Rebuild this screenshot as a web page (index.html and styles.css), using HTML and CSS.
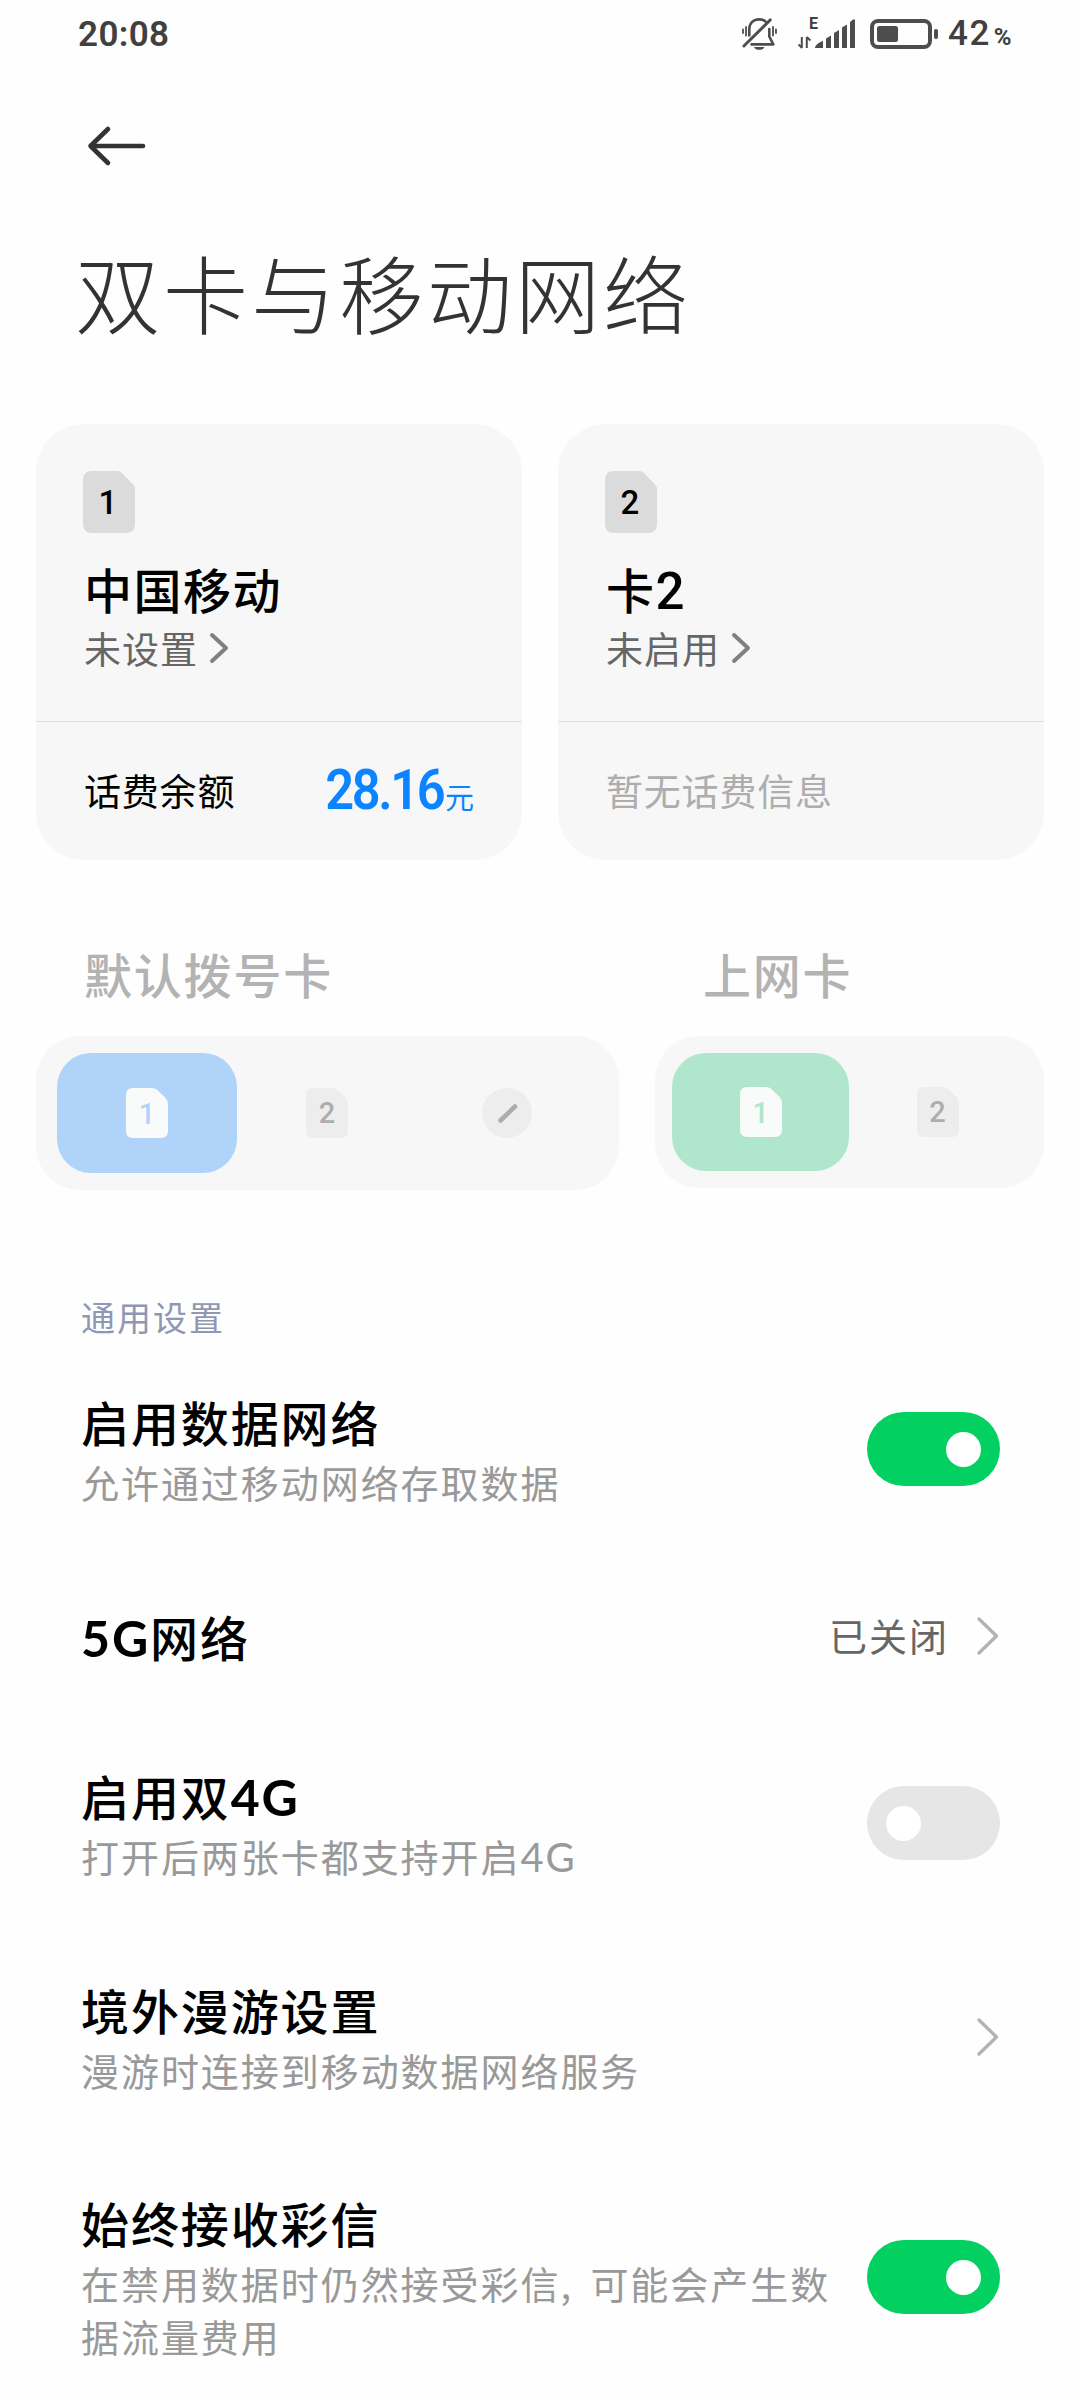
FILE: index.html
```
<!DOCTYPE html>
<html lang="zh-CN">
<head>
<meta charset="utf-8">
<title>双卡与移动网络</title>
<link rel="stylesheet" href="styles.css">
</head>
<body>
<header class="status">
  <span class="clock">20:08</span>
  <div class="status-icons">
    <svg class="bell" width="36" height="34" viewBox="0 0 36 34" fill="none" stroke="#4d4d4d" stroke-width="2.6" stroke-linecap="round" stroke-linejoin="round">
      <path d="M7.300 18.500V12.500C7.300 6 11.500 2.400 17.300 2.400C20 2.400 22.500 3.200 24 5"/>
      <path d="M27.300 12V19.500L31.300 27.400H9.500"/>
      <path d="M28.300 2.900L1.900 29" stroke-width="2.900"/>
      <path d="M1 12.500V16M4 10V18.500M31 10V18.500M34 12.500V16" stroke-width="1.800"/>
      <path d="M12 30H22.500C21 33.800 13.500 33.800 12 30Z" fill="#4d4d4d" stroke="none"/>
    </svg>
    <div class="signal">
      <span class="net">E</span>
      <svg width="58" height="32" viewBox="0 0 58 32" fill="#4d4d4d">
        <path d="M3.800 19V30M4 30L0.600 26.500M8.800 30V19M8.800 19L12.400 22.500" fill="none" stroke="#4d4d4d" stroke-width="2"/>
        <path d="M17 30C17 27.500 21 24 25 23V30ZM28 30V20.500L33 17.500V30ZM36 30V15L41 12V30ZM44 30V9.500L49 6.500V30ZM52 30V4L55 1.500H57V30Z"/>
      </svg>
    </div>
    <svg class="battery" width="69" height="30" viewBox="0 0 69 30">
      <rect x="2" y="2" width="58" height="26" rx="6" fill="none" stroke="#4d4d4d" stroke-width="4"/>
      <rect x="7" y="7" width="21" height="16" rx="2.500" fill="#4d4d4d"/>
      <rect x="64" y="10" width="4" height="10" rx="2" fill="#4d4d4d"/>
    </svg>
    <span class="percent">42<small>%</small></span>
  </div>
</header>

<nav class="nav">
  <svg width="60" height="42" viewBox="0 0 60 42" fill="none" stroke="#333" stroke-width="4.600" stroke-linecap="round" stroke-linejoin="round"><path d="M57 21H5M22 4L4.500 21L22 38"/></svg>
</nav>
<h1 class="title">双卡与移动网络</h1>

<section class="cards">
  <article class="card">
    <div class="card-top">
      <div class="sim sim-lg">
        <svg viewBox="0 0 52 62"><path d="M9 0H34Q37 0 39 2L50 13.500Q52 15.500 52 18V53Q52 62 43 62H9Q0 62 0 53V9Q0 0 9 0Z"/></svg>
        <span>1</span>
      </div>
      <h2>中国移动</h2>
      <p>未设置<svg class="chev-sm" width="20" height="32" viewBox="0 0 20 32"><path d="M3 3L17 16L3 29"/></svg></p>
    </div>
    <div class="card-bottom">
      <span>话费余额</span>
      <span class="amount"><b>28.16</b>元</span>
    </div>
  </article>
  <article class="card">
    <div class="card-top">
      <div class="sim sim-lg">
        <svg viewBox="0 0 52 62"><path d="M9 0H34Q37 0 39 2L50 13.500Q52 15.500 52 18V53Q52 62 43 62H9Q0 62 0 53V9Q0 0 9 0Z"/></svg>
        <span>2</span>
      </div>
      <h2>卡<b>2</b></h2>
      <p>未启用<svg class="chev-sm" width="20" height="32" viewBox="0 0 20 32"><path d="M3 3L17 16L3 29"/></svg></p>
    </div>
    <div class="card-bottom muted"><span>暂无话费信息</span></div>
  </article>
</section>

<section class="defaults">
  <div class="default-call">
    <h3>默认拨号卡</h3>
    <div class="panel">
      <div class="option blue"><div class="sim"><svg viewBox="0 0 42 50"><path d="M7 0H26Q30 0 32 2.500L39.500 10Q42 12.500 42 16V43Q42 50 35 50H7Q0 50 0 43V7Q0 0 7 0Z"/></svg><span>1</span></div></div>
      <div class="option"><div class="sim"><svg viewBox="0 0 42 50"><path d="M7 0H26Q30 0 32 2.500L39.500 10Q42 12.500 42 16V43Q42 50 35 50H7Q0 50 0 43V7Q0 0 7 0Z"/></svg><span>2</span></div></div>
      <div class="option"><svg width="50" height="50" viewBox="0 0 50 50"><circle cx="25" cy="25" r="25" fill="#ededed"/><path d="M18.500 32.500L33 18.500" stroke="#adadad" stroke-width="4.600" stroke-linecap="round"/></svg></div>
    </div>
  </div>
  <div class="default-data">
    <h3>上网卡</h3>
    <div class="panel">
      <div class="option green"><div class="sim"><svg viewBox="0 0 42 50"><path d="M7 0H26Q30 0 32 2.500L39.500 10Q42 12.500 42 16V43Q42 50 35 50H7Q0 50 0 43V7Q0 0 7 0Z"/></svg><span>1</span></div></div>
      <div class="option"><div class="sim"><svg viewBox="0 0 42 50"><path d="M7 0H26Q30 0 32 2.500L39.500 10Q42 12.500 42 16V43Q42 50 35 50H7Q0 50 0 43V7Q0 0 7 0Z"/></svg><span>2</span></div></div>
    </div>
  </div>
</section>

<h4 class="group">通用设置</h4>
<main class="rows">
  <div class="row">
    <div class="text"><h5>启用数据网络</h5><p>允许通过移动网络存取数据</p></div>
    <div class="toggle on"><i></i></div>
  </div>
  <div class="row single">
    <div class="text"><h5><b>5G</b>网络</h5></div>
    <div class="value">已关闭</div>
    <svg class="chev" width="24" height="42" viewBox="0 0 24 42"><path d="M3 4L20.500 21L3 38"/></svg>
  </div>
  <div class="row">
    <div class="text"><h5>启用双<b>4G</b></h5><p>打开后两张卡都支持开启<b>4G</b></p></div>
    <div class="toggle"><i></i></div>
  </div>
  <div class="row">
    <div class="text"><h5>境外漫游设置</h5><p>漫游时连接到移动数据网络服务</p></div>
    <svg class="chev" width="24" height="42" viewBox="0 0 24 42"><path d="M3 4L20.500 21L3 38"/></svg>
  </div>
  <div class="row tall">
    <div class="text"><h5>始终接收彩信</h5><p>在禁用数据时仍然接受彩信, 可能会产生数据流量费用</p></div>
    <div class="toggle on"><i></i></div>
  </div>
</main>
</body>
</html>
```

FILE: styles.css
```
* { box-sizing: border-box; margin: 0; padding: 0; }
html { overflow: hidden; }
body {
  width: 1080px; height: 2400px; overflow: hidden;
  background: #fefefe; color: #000;
  font-family: "Noto Sans CJK SC", sans-serif;
}
h1, h2, h3, h4, h5 { font-weight: 500; }

.status {
  height: 67px; padding: 0 68px 0 78px;
  display: flex; align-items: center; justify-content: space-between;
  font-family: Roboto, sans-serif; color: #404040;
}
.clock { padding-top: 1px; font-size: 35px; font-weight: 600; line-height: 67px; letter-spacing: 0.4px; }
.status-icons { display: flex; align-items: center; }
.bell { margin-right: 20px; }
.signal { display: flex; flex-direction: column; position: relative; margin-right: 14px; }
.net { position: absolute; left: 11px; top: -2px; font-size: 16px; line-height: 16px; font-weight: 700; }
.battery { margin-right: 9px; }
.percent { width: 64px; padding-top: 3px; font-size: 35px; font-weight: 500; line-height: 64px; letter-spacing: 1.5px; white-space: nowrap; }
.percent small { font-size: 24px; font-weight: 700; margin-left: 3px; letter-spacing: 0; }

.nav { height: 158px; padding-left: 86px; display: flex; align-items: center; }
.title {
  height: 138px; padding-left: 75px; line-height: 131px;
  font-size: 85px; font-weight: 300; letter-spacing: 3px; color: #333;
}

.cards { margin: 61px 36px 0; display: grid; grid-template-columns: 1fr 1fr; gap: 36px; }
.card { height: 436px; border-radius: 48px; background: #f7f7f7; }
.card-top { height: 298px; padding: 47px 48px 0 47px; border-bottom: 1px solid #dedede; }
.card h2 { height: 61px; margin: 25px 0 0 1px; font-size: 48px; line-height: 60px; letter-spacing: 1.500px; }
.card b { font-family: Roboto, sans-serif; font-weight: 500; }
.card h2 b { font-size: 51px; line-height: 1; }
.card p { display: flex; align-items: center; padding-left: 1px; font-size: 37px; line-height: 58px; letter-spacing: 1px; color: #666; }
.chev-sm { margin-left: 11px; fill: none; stroke: #808080; stroke-width: 4; stroke-linecap: round; stroke-linejoin: round; }
.card-bottom {
  height: 138px; padding: 0 48px 2px 48px;
  display: flex; align-items: center; justify-content: space-between;
  font-size: 37px; letter-spacing: 0.800px;
}
.muted { color: #adadad; }
.amount { display: flex; align-items: baseline; font-size: 29px; letter-spacing: 0; color: #0d84ff; }
.amount b { font-size: 55px; letter-spacing: -2.600px; font-weight: 600; margin-right: 2px; transform: scaleX(0.92); transform-origin: right; }

.sim { display: grid; width: 42px; height: 50px; place-items: center; }
.sim > * { grid-area: 1 / 1; }
.sim svg { width: 100%; height: 100%; fill: #ededed; }
.sim span { font: 500 29px/1 Roboto, sans-serif; color: #adadad; }
.sim-lg { width: 52px; height: 62px; }
.sim-lg svg { fill: #dbdbdb; }
.sim-lg span { font-size: 33px; color: #000; padding-right: 2px; }

.defaults { margin: 83px 36px 0; display: grid; grid-template-columns: 583px 389px; gap: 36px; align-items: start; }
.defaults h3 { padding-left: 48px; font-size: 48px; line-height: 60px; letter-spacing: 1.800px; color: #b3b3b3; }
.panel { display: flex; margin-top: 33px; height: 154px; border-radius: 44px; background: #f7f7f7; padding: 17px 21px; }
.option { width: 180px; height: 120px; border-radius: 34px; display: flex; align-items: center; justify-content: center; }
.default-data .panel { height: 152px; padding: 17px; }
.default-data .option { width: 177px; height: 118px; }
.blue { background: #b0d4f9; }
.green { background: #b0e6cb; }
.blue .sim svg, .green .sim svg { fill: #f9fafa; }
.blue .sim span, .green .sim span { padding-top: 2px; }
.blue .sim span { color: #b0d4f9; }
.green .sim span { color: #b0e6cb; }

.group { margin-top: 103px; padding-left: 81px; height: 49px; font-size: 34px; line-height: 48px; font-weight: 400; letter-spacing: 2px; color: #8f97b3; }

.row { height: 214px; padding: 0 80px 0 81px; display: flex; align-items: center; }
.single { height: 160px; }
.tall { height: 266px; }
.text { flex: 1; padding-bottom: 3px; }
.single .text { padding-bottom: 0; }
.row h5 { height: 67px; font-size: 48px; line-height: 66px; letter-spacing: 1.900px; }
.row h5 b { font-family: Lato, sans-serif; font-size: 50px; line-height: 1; font-weight: 700; }
.row p { width: 760px; font-size: 38px; line-height: 53px; letter-spacing: 1.950px; word-spacing: 7px; color: #999; }
.row p b { font-family: Lato, sans-serif; font-size: 40px; line-height: 1; font-weight: 400; }
.value { padding-bottom: 2px; font-size: 38px; letter-spacing: 2px; color: #666; line-height: 60px; margin-right: 27px; }
.chev { fill: none; stroke: #b3b3b3; stroke-width: 3.400; stroke-linecap: round; stroke-linejoin: round; }
.toggle { flex: none; width: 133px; height: 74px; border-radius: 37px; background: #e6e6e6; padding: 0 19px; display: flex; align-items: center; }
.toggle i { width: 35px; height: 35px; border-radius: 50%; background: #fff; }
.on { background: #02d162; justify-content: flex-end; }
.row:has(.toggle) p { margin-right: -60px; }
```
